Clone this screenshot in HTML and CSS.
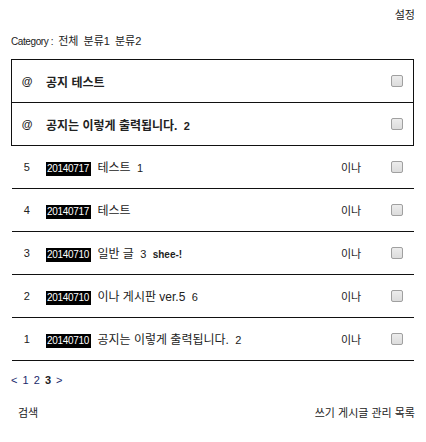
FILE: index.html
```html
<!DOCTYPE html>
<html lang="ko">
<head>
  <meta charset="UTF-8" />
  <title>게시판</title>
  <link rel="stylesheet" href="styles.css">
</head>
<body>
  <div class="board">
    <div class="top"><a href="#">설정</a></div>
    <div class="category">
      <span class="label">Category :</span>
      <a href="#" class="on">전체</a>
      <a href="#">분류1</a>
      <a href="#">분류2</a>
    </div>

    <table class="list">
      <tbody class="notice">
        <tr>
          <td class="num">@</td>
          <td class="title" colspan="2">공지 테스트</td>
          <td class="check"><input type="checkbox"></td>
        </tr>
        <tr>
          <td class="num">@</td>
          <td class="title" colspan="2">공지는 이렇게 출력됩니다. <span class="cmt">2</span></td>
          <td class="check"><input type="checkbox"></td>
        </tr>
      </tbody>
      <tbody>
        <tr>
          <td class="num">5</td>
          <td class="title"><span class="date">20140717</span> 테스트 <span class="cmt">1</span></td>
          <td class="author">이나</td>
          <td class="check"><input type="checkbox"></td>
        </tr>
        <tr>
          <td class="num">4</td>
          <td class="title"><span class="date">20140717</span> 테스트</td>
          <td class="author">이나</td>
          <td class="check"><input type="checkbox"></td>
        </tr>
        <tr>
          <td class="num">3</td>
          <td class="title"><span class="date">20140710</span> 일반 글 <span class="cmt">3</span> <b class="nick">shee-!</b></td>
          <td class="author">이나</td>
          <td class="check"><input type="checkbox"></td>
        </tr>
        <tr>
          <td class="num">2</td>
          <td class="title"><span class="date">20140710</span> 이나 게시판 ver.5 <span class="cmt">6</span></td>
          <td class="author">이나</td>
          <td class="check"><input type="checkbox"></td>
        </tr>
        <tr>
          <td class="num">1</td>
          <td class="title"><span class="date">20140710</span> 공지는 이렇게 출력됩니다. <span class="cmt">2</span></td>
          <td class="author">이나</td>
          <td class="check"><input type="checkbox"></td>
        </tr>
      </tbody>
    </table>

    <div class="paging">
      <a href="#">&lt;</a> <a href="#">1</a> <a href="#">2</a> <b>3</b> <a href="#">&gt;</a>
    </div>

    <div class="bottom">
      <a href="#" class="search">검색</a>
      <div class="links">
        <a href="#">쓰기</a> <a href="#">게시글 관리</a> <a href="#">목록</a>
      </div>
    </div>
  </div>
</body>
</html>
```

FILE: styles.css
```css
body {
  margin: 0;
  font-family: "Liberation Sans", "Noto Sans CJK KR", sans-serif;
  font-size: 12px;
  color: #222;
  background: #fff;
}

a {
  color: #222;
  text-decoration: none;
}

.board {
  padding: 0 11px;
}

.top {
  padding-top: 8px;
  height: 14px;
  line-height: 14px;
  text-align: right;
  font-size: 11px;
}

.category {
  margin-top: 12px;
  margin-bottom: 11px;
  height: 14px;
  line-height: 14px;
  font-size: 11px;
}

.category .label {
  font-size: 10px;
  letter-spacing: -0.4px;
  margin-right: 2px;
}

.category a {
  margin-right: 2px;
}

.list {
  width: 403px;
  border-collapse: collapse;
}

.list td {
  height: 42px;
  padding: 0;
  border-bottom: 1px solid #111;
  vertical-align: middle;
}

.notice {
  border: 1px solid #111;
}

.notice td {
  font-weight: bold;
}

.num {
  width: 30px;
  text-align: center;
  font-size: 11px;
}

.title {
  padding-left: 4px !important;
}

.date {
  display: inline-block;
  background: #000;
  color: #fff;
  font-size: 10px;
  letter-spacing: -0.3px;
  line-height: 14px;
  padding: 0 2px 0 1px;
  margin-right: 3px;
}

.cmt {
  font-size: 11px;
  margin-left: 3px;
}

.nick {
  font-size: 10px;
  margin-left: 3px;
}

.author {
  width: 42px;
  padding-left: 0;
  font-size: 11px;
}

.check {
  width: 30px;
}

.check input {
  appearance: none;
  -webkit-appearance: none;
  display: block;
  width: 12px;
  height: 12px;
  margin: 0 0 0 8px;
  border: 1px solid #a0a0a0;
  border-radius: 2px;
  background: linear-gradient(#ececec, #dcdcdc);
}

.paging {
  margin-top: 12px;
  height: 14px;
  line-height: 14px;
  font-size: 11px;
  word-spacing: 2px;
}

.paging a {
  color: #1a2a6c;
}

.bottom {
  margin-top: 19px;
  display: flex;
  justify-content: space-between;
  height: 14px;
  line-height: 14px;
  font-size: 11px;
}

.search {
  padding-left: 7px;
}
```
